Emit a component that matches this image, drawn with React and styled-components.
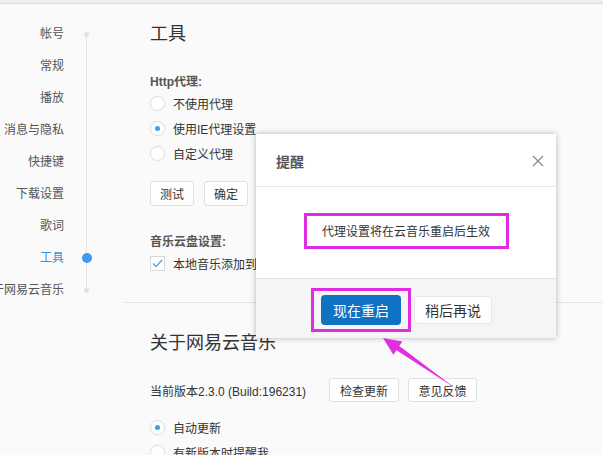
import React from 'react';
import styled, { createGlobalStyle } from 'styled-components';

const GlobalStyle = createGlobalStyle`
    html, body {
        margin: 0;
        padding: 0;
        background: #fafafa;
        font-family: "Liberation Sans", "Noto Sans CJK SC", sans-serif;
        color: #333;
    }
`

const Page = styled.div`
    position: relative;
    width: 603px;
    height: 455px;
    overflow: hidden;
    background: #fafafa;
`

const TopBar = styled.div`
    height: 3px;
    background: #efefef;
    border-bottom: 1px solid #dedede;
`

const Layout = styled.div`
    display: flex;
`

const Sidebar = styled.div`
    width: 124px;
    flex-shrink: 0;
`

const Nav = styled.div`
    position: relative;
    padding-top: 14px;
    &::before {
        content: '';
        position: absolute;
        left: 86px;
        top: 30px;
        height: 256px;
        width: 1px;
        background: #e6e6e6;
    }
`

const NavItem = styled.div`
    height: 32px;
    display: flex;
    align-items: center;
`

const NavLabel = styled.div`
    width: 64px;
    display: flex;
    justify-content: flex-end;
    white-space: nowrap;
    font-size: 12px;
    line-height: 16px;
    color: ${p => (p.$active ? '#3a8fd8' : '#555')};
`

const Marker = styled.div`
    width: 45px;
    display: flex;
    justify-content: center;
    position: relative;
    z-index: 1;
`

const Dot = styled.span`
    display: block;
    border-radius: 50%;
    width: ${p => (p.$active ? '10px' : '5px')};
    height: ${p => (p.$active ? '10px' : '5px')};
    background: ${p => (p.$active ? '#3d9cf0' : '#e2e2e2')};
`

const Content = styled.div`
    flex: 1;
    padding-top: 18px;
`

const Section = styled.div`
    padding-left: 26px;
`

const Title = styled.h2`
    margin: 0;
    font-size: 18px;
    line-height: 24px;
    font-weight: normal;
    color: #333;
`

const FieldLabel = styled.div`
    margin-top: ${p => p.$top || 0}px;
    font-size: 12px;
    line-height: 18px;
    font-weight: bold;
    color: #555;
`

const OptionRow = styled.div`
    height: 25px;
    display: flex;
    align-items: center;
    gap: 8px;
    font-size: 12px;
    color: #333;
    white-space: nowrap;
`

const Radio = styled.span`
    width: 13px;
    height: 13px;
    border-radius: 50%;
    border: 1px solid #e0e0e0;
    background: #fff;
    box-shadow: 0 0 2px rgba(0, 0, 0, 0.06);
    display: flex;
    align-items: center;
    justify-content: center;
    flex-shrink: 0;
    &::after {
        content: '';
        width: 5px;
        height: 5px;
        border-radius: 50%;
        background: ${p => (p.$checked ? '#3d9ee8' : 'transparent')};
    }
`

const Checkbox = styled.span`
    width: 13px;
    height: 13px;
    border: 1px solid #d8d8d8;
    background: #fff;
    display: flex;
    align-items: center;
    justify-content: center;
    flex-shrink: 0;
`

const ButtonRow = styled.div`
    display: flex;
    gap: 10px;
    margin-top: 15px;
`

const Button = styled.button`
    height: ${p => p.$h || 25}px;
    width: ${p => p.$w || 44}px;
    padding: 0;
    border: 1px solid #e0e0e0;
    border-radius: 3px;
    background: #fff;
    font-family: inherit;
    font-size: 12px;
    color: #333;
`

const Divider = styled.div`
    margin-top: 26px;
    border-top: 1px solid #e4e4e4;
`

const AboutSection = styled(Section)`
    padding-top: 28px;
`

const VersionRow = styled.div`
    display: flex;
    align-items: center;
    margin-top: 23px;
    margin-bottom: 13px;
    font-size: 12px;
    gap: 9px;
    span {
        margin-right: 14px;
    }
`

const Modal = styled.div`
    position: absolute;
    left: 256px;
    top: 134px;
    width: 300px;
    background: #fff;
    box-shadow: 0 0 6px rgba(0, 0, 0, 0.28);
    z-index: 5;
`

const ModalHeader = styled.div`
    height: 53px;
    display: flex;
    align-items: center;
    justify-content: space-between;
    padding: 2px 12px 0 20px;
    box-sizing: border-box;
    border-bottom: 1px solid #e6e6e6;
    h3 {
        margin: 0;
        font-size: 14px;
        font-weight: bold;
        color: #555;
    }
`

const ModalBody = styled.div`
    height: 91px;
    display: flex;
    align-items: center;
    justify-content: center;
    padding-bottom: 4px;
    box-sizing: border-box;
`

const Highlight = styled.div`
    border: 3px solid #e02ce0;
    padding: ${p => p.$pad || '0'};
    display: flex;
    align-items: center;
    justify-content: center;
`

const Message = styled.div`
    width: 199px;
    height: 30px;
    display: flex;
    align-items: center;
    justify-content: center;
    font-size: 12px;
    color: #333;
`

const ModalFooter = styled.div`
    height: 60px;
    background: #f5f5f7;
    border-top: 1px solid #e4e4e4;
    display: flex;
    align-items: center;
    justify-content: center;
    gap: 3px;
    padding: 2px 9px 0 0;
    box-sizing: border-box;
`

const PrimaryButton = styled.button`
    width: 80px;
    height: 30px;
    border: none;
    border-radius: 4px;
    background: #0f72c2;
    color: #fff;
    font-family: inherit;
    font-size: 14px;
    padding: 0;
`

const SecondaryButton = styled.button`
    width: 78px;
    height: 28px;
    border: 1px solid #e6e6e6;
    border-radius: 4px;
    background: #fff;
    color: #333;
    font-family: inherit;
    font-size: 14px;
    padding: 0;
`

const Arrow = styled.svg`
    position: absolute;
    left: 0;
    top: 0;
    z-index: 6;
    pointer-events: none;
`

const navItems = ['帐号', '常规', '播放', '消息与隐私', '快捷键', '下载设置', '歌词', '工具', '关于网易云音乐']

export default function App() {
    return (
        <Page>
            <GlobalStyle />
            <TopBar />
            <Layout>
                <Sidebar>
                    <Nav>
                        {navItems.map((item, i) => {
                            const active = item === '工具'
                            const edge = i === 0 || i === navItems.length - 1
                            return (
                                <NavItem key={item}>
                                    <NavLabel $active={active}>{item}</NavLabel>
                                    <Marker>{(active || edge) && <Dot $active={active} />}</Marker>
                                </NavItem>
                            )
                        })}
                    </Nav>
                </Sidebar>
                <Content>
                    <Section>
                        <Title>工具</Title>
                        <FieldLabel $top={27}>Http代理:</FieldLabel>
                        <OptionRow><Radio />不使用代理</OptionRow>
                        <OptionRow><Radio $checked />使用IE代理设置</OptionRow>
                        <OptionRow><Radio />自定义代理</OptionRow>
                        <ButtonRow>
                            <Button>测试</Button>
                            <Button>确定</Button>
                        </ButtonRow>
                        <FieldLabel $top={27}>音乐云盘设置:</FieldLabel>
                        <OptionRow>
                            <Checkbox>
                                <svg width="11" height="9" viewBox="0 0 11 9">
                                    <path d="M1 4.5 L4 7.5 L10 1" fill="none" stroke="#5aa6d8" strokeWidth="1.4" />
                                </svg>
                            </Checkbox>
                            本地音乐添加到云盘时自动上传
                        </OptionRow>
                    </Section>
                    <Divider />
                    <AboutSection>
                        <Title>关于网易云音乐</Title>
                        <VersionRow>
                            <span>当前版本2.3.0 (Build:196231)</span>
                            <Button $w={70} $h={24}>检查更新</Button>
                            <Button $w={69} $h={24}>意见反馈</Button>
                        </VersionRow>
                        <OptionRow><Radio $checked />自动更新</OptionRow>
                        <OptionRow><Radio />有新版本时提醒我</OptionRow>
                    </AboutSection>
                </Content>
            </Layout>

            <Modal>
                <ModalHeader>
                    <h3>提醒</h3>
                    <svg width="12" height="12" viewBox="0 0 12 12">
                        <path d="M1 1 L11 11 M11 1 L1 11" stroke="#888" strokeWidth="1.2" />
                    </svg>
                </ModalHeader>
                <ModalBody>
                    <Highlight>
                        <Message>代理设置将在云音乐重启后生效</Message>
                    </Highlight>
                </ModalBody>
                <ModalFooter>
                    <Highlight $pad="4px 7px">
                        <PrimaryButton>现在重启</PrimaryButton>
                    </Highlight>
                    <SecondaryButton>稍后再说</SecondaryButton>
                </ModalFooter>
            </Modal>

            <Arrow width="603" height="455" viewBox="0 0 603 455">
                <polygon
                    points="383,338 402.4,341.5 399.3,346 455,388 396.5,350.2 393.4,354.7"
                    fill="#e22ee2"
                />
            </Arrow>
        </Page>
    );
}
